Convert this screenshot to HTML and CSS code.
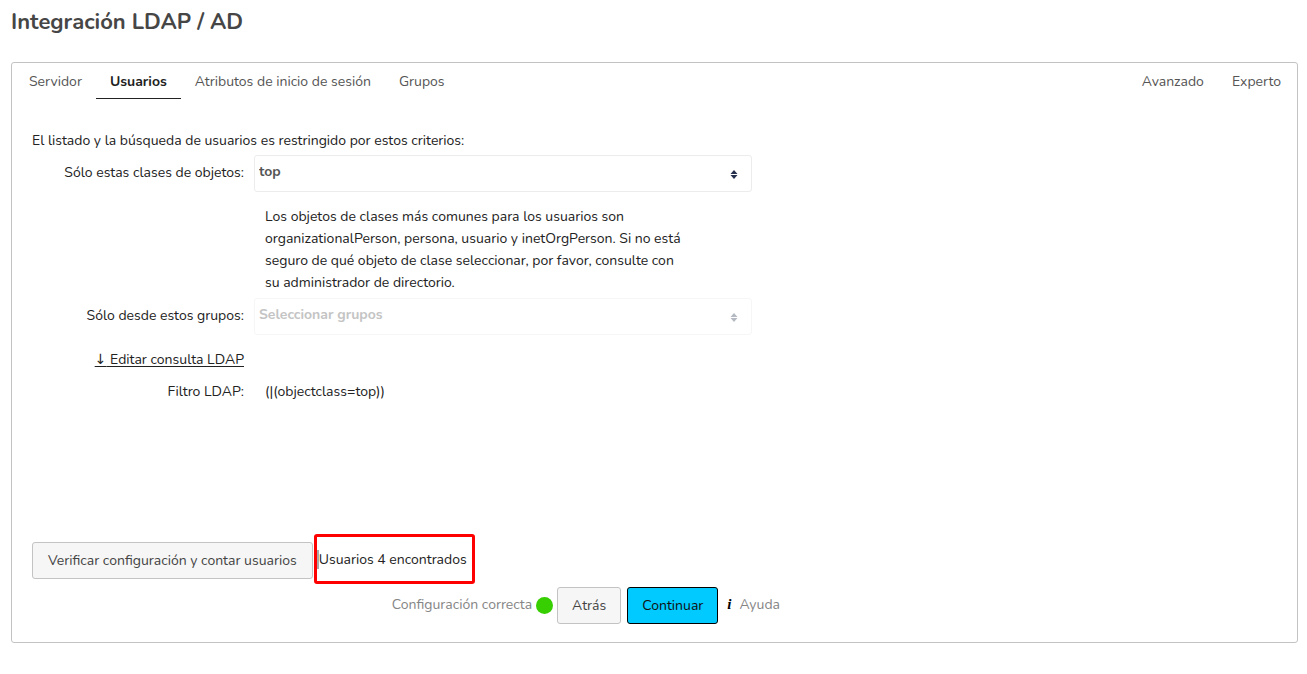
FILE: index.html
```html
<!DOCTYPE html>
<html lang="es">
<head>
<meta charset="utf-8">
<meta name="viewport" content="width=device-width, initial-scale=1">
<title>Integración LDAP / AD</title>
<link rel="stylesheet" href="styles.css">
</head>
<body>
<main class="page">
  <h1 class="title">Integración LDAP / AD</h1>
  <form class="panel">
    <nav class="tabs">
      <a class="tab" href="#servidor">Servidor</a>
      <a class="tab tab-active" href="#usuarios" aria-current="page">Usuarios</a>
      <a class="tab" href="#atributos">Atributos de inicio de sesión</a>
      <a class="tab" href="#grupos">Grupos</a>
      <a class="tab tab-right" href="#avanzado">Avanzado</a>
      <a class="tab" href="#experto">Experto</a>
    </nav>
    <section class="content">
      <p class="intro">El listado y la búsqueda de usuarios es restringido por estos criterios:</p>
      <div class="fields">
        <label class="label" for="clases">Sólo estas clases de objetos:</label>
        <div class="picker">
          <select class="select" id="clases"><option>top</option></select>
          <svg class="arrows" viewBox="0 0 8 9" aria-hidden="true"><path d="M4 0 7.5 4H.5ZM.5 5H7.5L4 9Z"/></svg>
        </div>
        <p class="help">Los objetos de clases más comunes para los usuarios son organizationalPerson, persona, usuario y inetOrgPerson. Si no está seguro de qué objeto de clase seleccionar, por favor, consulte con su administrador de directorio.</p>
        <label class="label" for="grupos">Sólo desde estos grupos:</label>
        <div class="picker picker-disabled">
          <select class="select" id="grupos" disabled><option>Seleccionar grupos</option></select>
          <svg class="arrows" viewBox="0 0 8 9" aria-hidden="true"><path d="M4 0 7.5 4H.5ZM.5 5H7.5L4 9Z"/></svg>
        </div>
        <a class="edit" href="#editar"><span class="edit-arrow">↓</span> Editar consulta LDAP</a>
        <span class="filter-label">Filtro LDAP:</span>
        <output class="filter">(|(objectclass=top))</output>
      </div>
      <div class="verify">
        <button class="button button-verify" type="button">Verificar configuración y contar usuarios</button>
        <div class="result"><span class="caret"></span>Usuarios 4 encontrados</div>
      </div>
      <div class="controls">
        <span class="status">Configuración correcta</span>
        <span class="dot"></span>
        <button class="button button-back" type="button">Atrás</button>
        <button class="button button-primary" type="button">Continuar</button>
        <a class="help-link" href="#ayuda"><span class="info">i</span>Ayuda</a>
      </div>
    </section>
  </form>
</main>
</body>
</html>
```
FILE: styles.css
```css
* { box-sizing: border-box; }
body {
  margin: 0;
  background: #fff;
  color: #222;
  font: 14px/22px "Nunito", "Open Sans", sans-serif;
}
p { margin: 0; }
.page { padding: 7px 9px 31px 11px; }
.title {
  margin: 0 0 25px;
  color: #464646;
  font-size: 22px;
  line-height: 30px;
  font-weight: 700;
}
.panel {
  border: 1px solid #c3c3c3;
  border-radius: 3px;
  padding-bottom: 18px;
}
.tabs { display: flex; padding: 0 2px 0 3px; }
.tab {
  padding: 8px 14px 5px;
  border-bottom: 1px solid transparent;
  color: #555;
  text-decoration: none;
}
.tab-active { color: #222; font-weight: 700; border-color: #222; }
.tab-right { margin-left: auto; }
.content { padding: 31px 20px 0; }
.intro { margin-bottom: 3px; }
.fields {
  display: grid;
  grid-template-columns: 212px minmax(0, 498px);
  column-gap: 10px;
}
.label, .filter-label, .edit { justify-self: end; white-space: nowrap; }
.label { padding-top: 7px; }
.picker { position: relative; }
.select {
  display: block;
  width: 100%;
  height: 37px;
  padding: 0 32px 4px 4px;
  appearance: none;
  border: 1px solid #ececec;
  border-radius: 3px;
  background: #fff;
  color: #555;
  font: inherit;
  font-weight: 700;
  opacity: 1;
}
.arrows {
  position: absolute;
  right: 14px;
  top: 15px;
  width: 8px;
  height: 9px;
  fill: #26304d;
}
.picker-disabled .select { border-color: #f6f6f6; color: #c4c4c4; }
.picker-disabled .arrows { fill: #b5bac2; }
.help { grid-column: 2; width: 430px; padding: 14px 0 4px 11px; }
.edit {
  grid-column: 1;
  margin: 13px 0 10px;
  color: #222;
  text-underline-offset: 2px;
}
.edit-arrow { font-family: "DejaVu Sans", sans-serif; }
.filter-label { grid-column: 1; }
.filter { padding-left: 11px; }
.verify { display: flex; align-items: flex-start; margin-top: 131px; }
.button {
  height: 37px;
  padding: 0 14px;
  border: 1px solid #c3c3c3;
  border-radius: 3px;
  background: #f6f6f6;
  color: #444;
  font: inherit;
  white-space: nowrap;
}
.button-verify { margin-top: 8px; padding: 0 15px; }
.result {
  display: flex;
  align-items: center;
  height: 50px;
  margin-left: 1px;
  padding: 1px 5px 0 0;
  border: 3px solid #ff0000;
  border-radius: 3px;
  white-space: nowrap;
}
.caret { width: 2px; height: 19px; background: #aaa; }
.controls {
  display: flex;
  align-items: center;
  justify-content: flex-end;
  max-width: 748px;
  margin-top: 3px;
  white-space: nowrap;
}
.status { padding-bottom: 2px; color: #858585; }
.dot {
  width: 17px;
  height: 17px;
  margin: 0 4px;
  border-radius: 50%;
  background: #37ce02;
}
.button-back { margin-right: 6px; }
.button-primary { border-color: #000; background: #00caff; color: #111; }
.help-link { margin-left: 9px; padding-bottom: 2px; color: #858585; text-decoration: none; }
.info {
  margin-right: 8px;
  color: #000;
  font: italic 700 15px "Liberation Serif", serif;
}
```
